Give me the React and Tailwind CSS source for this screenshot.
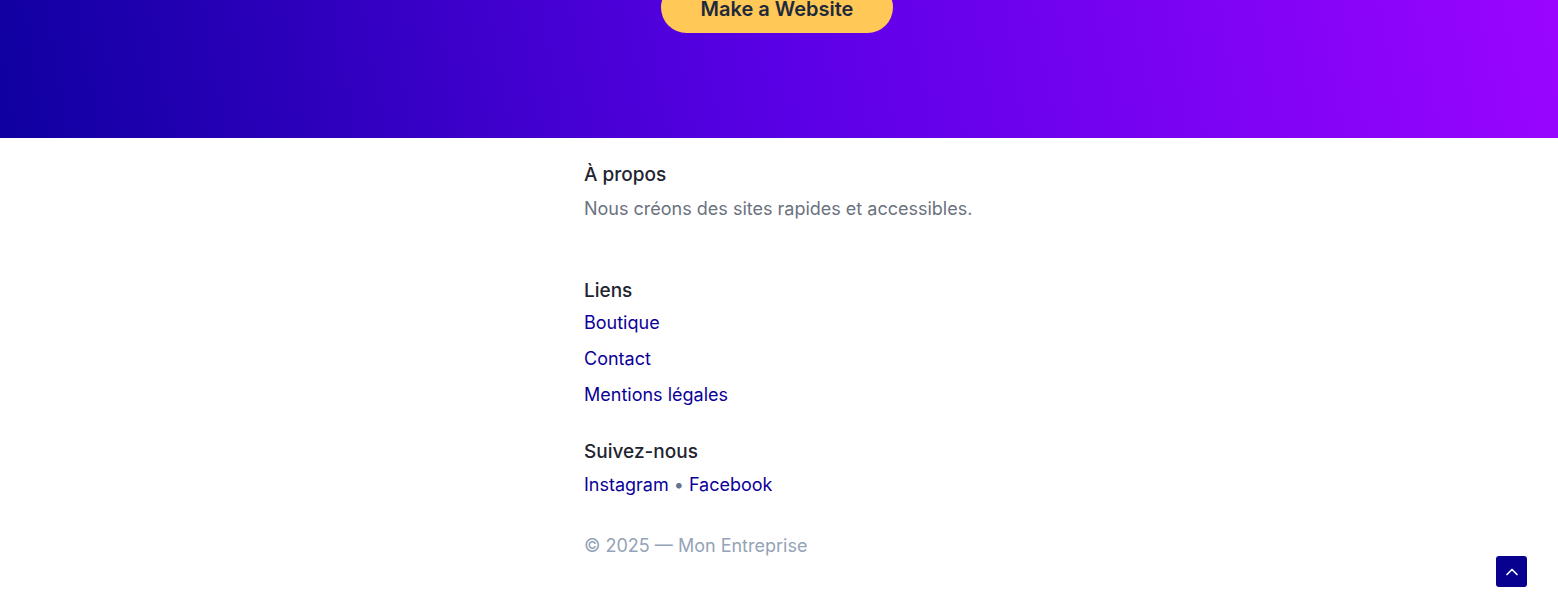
import { ChevronUp } from 'lucide-react';

const font = { fontFamily: 'Inter, "Liberation Sans", sans-serif' };

const App = () => {
    return (
        <div className="min-h-[614px] bg-white relative" style={font}>
            {/* hero tail, page is scrolled so only the bottom shows */}
            <section className="h-[138px] bg-[linear-gradient(80deg,#0f00a0_0%,#5a00e6_50%,#9a05ff_100%)] flex justify-center overflow-hidden">
                <div className="-mt-[18px] -ml-[4px]">
                    <a href="#" className="flex items-center justify-center w-[232px] h-[51px] pt-[2px] rounded-full bg-[#ffc857] text-[#1e2a3b] text-[20px] font-semibold">
                        Make a Website
                    </a>
                </div>
            </section>

            <footer className="w-[390px] mx-auto pt-[25px] pb-[40px]">
                <div>
                    <h3 className="text-[19px] font-medium text-[#1f2430] leading-[24px]">À propos</h3>
                    <p className="mt-[10px] text-[18px] text-[#6b7280] leading-[24px]">Nous créons des sites rapides et accessibles.</p>
                </div>

                <div className="mt-[58px]">
                    <h3 className="text-[19px] font-medium text-[#1f2430] leading-[24px]">Liens</h3>
                    <ul className="mt-[8px] flex flex-col gap-[12px] text-[18px] leading-[24px] text-[#0b0099]">
                        <li><a href="#">Boutique</a></li>
                        <li><a href="#">Contact</a></li>
                        <li><a href="#">Mentions légales</a></li>
                    </ul>
                </div>

                <div className="mt-[33px]">
                    <h3 className="text-[19px] font-medium text-[#1f2430] leading-[24px]">Suivez-nous</h3>
                    <p className="mt-[9px] text-[18px] leading-[24px] text-[#0b0099]">
                        <a href="#">Instagram</a>
                        <span className="text-[#64748b] mx-[5px]">•</span>
                        <a href="#">Facebook</a>
                    </p>
                </div>

                <p className="mt-[37px] text-[18px] leading-[24px] text-[#94a3b8]">© 2025 — Mon Entreprise</p>
            </footer>

            <button className="absolute right-[31px] top-[556px] w-[31px] h-[31px] rounded-[3px] bg-[#08008f] flex items-center justify-center text-white">
                <ChevronUp size={20} strokeWidth={2} />
            </button>
        </div>
    );
};

export default App;
